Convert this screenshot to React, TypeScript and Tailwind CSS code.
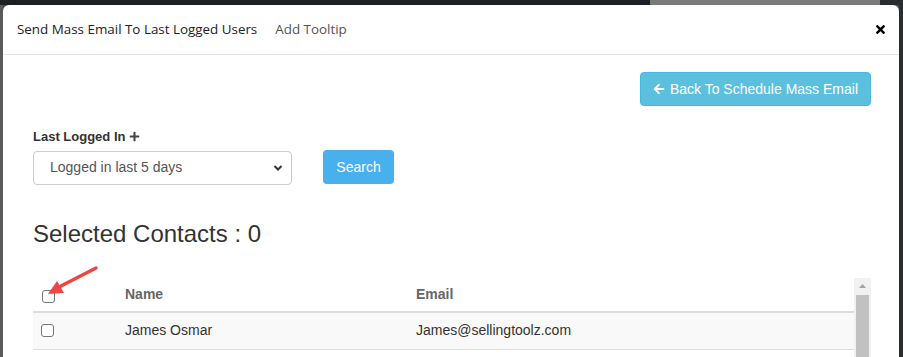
import { FaArrowLeft, FaPlus, FaTimes } from "react-icons/fa";

const sans = { fontFamily: '"Liberation Sans", Arial, sans-serif' };

function Box() {
    return <span className="block w-[13px] h-[13px] rounded-[3px] border border-[#767676] bg-white" />;
}

export default function App() {
    return (
        <div className="relative w-[903px] h-[357px] overflow-hidden bg-[#4a4a4a]" style={sans}>
            <div className="h-[5px] flex">
                <div className="w-[650px] bg-[#1c2024]" />
                <div className="w-[230px] bg-[#7a7a7a]" />
                <div className="flex-1 bg-[#2a2d30]" />
            </div>
            <div className="flex">
                <div className="w-[3px] bg-[#5a5a5a]" />
                <div className="w-[896px] h-[352px] bg-white rounded-t-[6px] overflow-hidden">
                    <div className="h-[50px] flex items-center justify-between border-b border-[#e5e5e5] pl-[14px] pr-[12px]">
                        <div className="flex items-center gap-[18px] text-[13.4px]" style={{ fontFamily: '"Open Sans", sans-serif' }}>
                            <span className="text-[#222]">Send Mass Email To Last Logged Users</span>
                            <span className="text-[#555]">Add Tooltip</span>
                        </div>
                        <FaTimes className="text-[13px] text-black" />
                    </div>
                    <div className="pl-[30px] pr-[28px] pt-[17px]">
                        <div className="flex justify-end">
                            <button className="h-[34px] px-[12px] flex items-center gap-[5px] rounded-[4px] bg-[#5bc0de] border border-[#46b8da] text-white text-[14px]">
                                <FaArrowLeft className="text-[12px]" />
                                Back To Schedule Mass Email
                            </button>
                        </div>
                        <div className="mt-[21px] flex items-center gap-[4px] text-[13px] font-bold text-[#333]">
                            Last Logged In <FaPlus className="text-[11px] text-[#444]" />
                        </div>
                        <div className="mt-[4px] flex items-center gap-[31px]">
                            <div className="w-[259px] h-[34px] rounded-[4px] border border-[#ccc] flex items-center justify-between pl-[16px] pr-[8px] text-[14px] text-[#555]">
                                <span>Logged in last 5 days</span>
                                <svg width="10" height="8" viewBox="0 0 10 8"><path d="M1.5 2 L5 5.5 L8.5 2" stroke="#333" strokeWidth="2" fill="none" /></svg>
                            </div>
                            <button className="h-[34px] w-[71px] -mt-[1px] rounded-[4px] bg-[#47b0ed] text-white text-[14px]">Search</button>
                        </div>
                        <div className="mt-[35px] text-[24px] leading-[28px] text-[#333]">Selected Contacts : 0</div>
                        <div className="mt-[30px] flex">
                            <div className="flex-1 text-[14px]">
                                <div className="h-[35px] flex items-end pb-[6px] border-b-2 border-[#ddd] font-bold text-[#666]">
                                    <div className="w-[84px] pl-[9px] pb-[2px]"><Box /></div>
                                    <div className="w-[291px] pl-[8px]">Name</div>
                                    <div className="pl-[8px]">Email</div>
                                </div>
                                <div className="h-[37px] flex items-center bg-[#f9f9f9] border-b border-[#ddd] text-[#333]">
                                    <div className="w-[84px] pl-[8px]"><Box /></div>
                                    <div className="w-[291px] pl-[8px]">James Osmar</div>
                                    <div className="pl-[8px]">James@sellingtoolz.com</div>
                                </div>
                            </div>
                            <div className="w-[17px] h-[90px] bg-[#f1f1f1] flex flex-col items-center">
                                <svg width="9" height="14" viewBox="0 0 9 14" className="mt-[1px]"><path d="M1 9 L4.5 5 L8 9 Z" fill="#a3a3a3" /></svg>
                                <div className="w-[13px] flex-1 bg-[#c1c1c1] mt-[2px]" />
                            </div>
                        </div>
                    </div>
                </div>
                <div className="flex-1 bg-[#2b2e31]" />
            </div>
            <svg className="absolute left-0 top-0 pointer-events-none" width="903" height="357">
                <line x1="96" y1="268" x2="59" y2="287" stroke="#f04545" strokeWidth="3.5" strokeLinecap="round" />
                <path d="M48 294 L57 281 L64 293 Z" fill="#f04545" />
            </svg>
        </div>
    );
}
